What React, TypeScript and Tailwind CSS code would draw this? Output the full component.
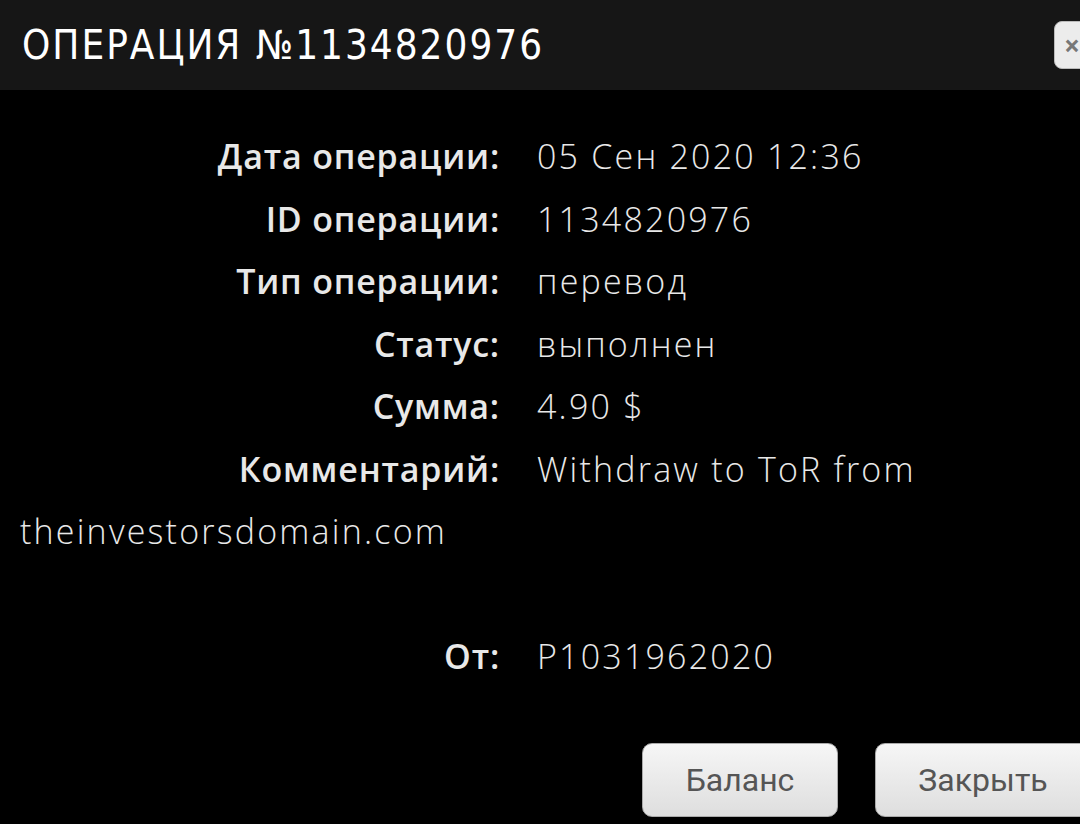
import React from "react";

const rows = [
  { label: "Дата операции:", value: "05 Сен 2020 12:36" },
  { label: "ID операции:", value: "1134820976" },
  { label: "Тип операции:", value: "перевод" },
  { label: "Статус:", value: "выполнен" },
  { label: "Сумма:", value: "4.90 $" },
  { label: "Комментарий:", value: "Withdraw to ToR from theinvestorsdomain.com" },
];

const Row = ({ label, value }: { label: string; value: string }) => (
  <div className="leading-[62.5px]">
    <span className="inline-block w-[480px] text-right font-semibold tracking-[0.8px] text-[#e8e8e8]">{label}</span>
    <span className="pl-[37px] font-light tracking-[2.2px] text-[#e8e8e8]">{value}</span>
  </div>
);

const App = () => {
  return (
    <div className="w-[1080px] h-[824px] bg-black overflow-hidden font-['Open_Sans','Noto_Sans',sans-serif]">
      <div className="h-[90px] bg-[#161616] flex items-center justify-between">
        <h1 className="pl-[22px] text-white text-[40px] tracking-[2px] font-['DejaVu_Sans_Condensed','Liberation_Sans_Narrow','Roboto',sans-serif] font-normal">
          ОПЕРАЦИЯ №1134820976
        </h1>
        <button className="mr-[-30px] w-[56px] h-[48px] rounded-lg bg-[#ececec] border border-[#bbb] text-[#777] text-[28px] leading-none font-bold text-left pl-[9px]">
          ×
        </button>
      </div>
      <div className="pl-[20px] pt-[35px] w-[1060px] text-[34px]">
        {rows.map((r) => (
          <Row key={r.label} {...r} />
        ))}
        <div className="h-[62.5px]" />
        <Row label="От:" value="P1031962020" />
      </div>
      <div className="flex justify-end gap-[37px] mr-[-11px] mt-[55px]">
        <button className="w-[196px] h-[74px] rounded-[10px] border border-[#aaa] bg-gradient-to-b from-[#f6f6f6] to-[#dedede] text-[#555] text-[32px] font-['Roboto',sans-serif]">
          Баланс
        </button>
        <button className="w-[216px] h-[74px] rounded-[10px] border border-[#aaa] bg-gradient-to-b from-[#f6f6f6] to-[#dedede] text-[#555] text-[32px] font-['Roboto',sans-serif]">
          Закрыть
        </button>
      </div>
    </div>
  );
};

export default App;
